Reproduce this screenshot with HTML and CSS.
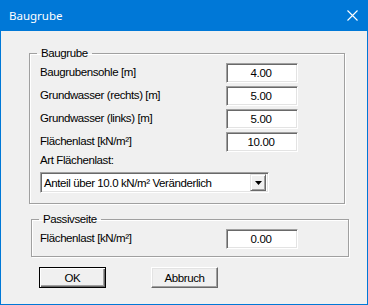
FILE: index.html
```html
<!DOCTYPE html>
<html lang="de">
<head>
    <meta charset="UTF-8">
    <title>Baugrube</title>
    <link rel="stylesheet" href="styles.css">
</head>
<body>
    <div class="window">
        <div class="titlebar">
            <span class="title">Baugrube</span>
            <svg class="close" width="11" height="11" viewBox="0 0 11 11">
                <path d="M0.5 0.5 L10.5 10.5 M10.5 0.5 L0.5 10.5" stroke="#fff" stroke-width="1.1"/>
            </svg>
        </div>

        <div class="content">
            <fieldset class="group group-main">
                <legend>Baugrube</legend>
                <div class="rows">
                    <div class="row">
                        <span>Baugrubensohle [m]</span>
                        <div class="field">4.00</div>
                    </div>
                    <div class="row">
                        <span>Grundwasser (rechts) [m]</span>
                        <div class="field">5.00</div>
                    </div>
                    <div class="row">
                        <span>Grundwasser (links) [m]</span>
                        <div class="field">5.00</div>
                    </div>
                    <div class="row">
                        <span>Flächenlast [kN/m²]</span>
                        <div class="field">10.00</div>
                    </div>
                </div>
                <div class="combo-label">Art Flächenlast:</div>
                <div class="combo">
                    <span class="combo-text">Anteil über 10.0 kN/m² Veränderlich</span>
                    <span class="combo-btn">
                        <svg width="7" height="4" viewBox="0 0 7 4"><path d="M0 0 H7 L3.5 4 Z" fill="#000"/></svg>
                    </span>
                </div>
            </fieldset>

            <fieldset class="group group-passive">
                <legend>Passivseite</legend>
                <div class="row">
                    <span>Flächenlast [kN/m²]</span>
                    <div class="field">0.00</div>
                </div>
            </fieldset>

            <div class="buttons">
                <button class="btn btn-default">OK</button>
                <button class="btn">Abbruch</button>
            </div>
        </div>
    </div>
</body>
</html>
```

FILE: styles.css
```css
body {
    margin: 0;
    padding: 0;
    font-family: "Liberation Sans", Arial, sans-serif;
    font-size: 11.5px;
    letter-spacing: -0.4px;
    color: #000;
}

.window {
    width: 368px;
    height: 305px;
    box-sizing: border-box;
    border: 1px solid #0078d7;
    border-top: none;
    background-color: #f0f0f0;
}

.titlebar {
    height: 31px;
    background-color: #0078d7;
    display: flex;
    align-items: center;
    justify-content: space-between;
    padding: 0 9px 1px 9px;
    margin: 0 -1px;
    box-sizing: border-box;
}

.title {
    font-family: "Noto Sans", "Open Sans", sans-serif;
    font-size: 11.5px;
    letter-spacing: 0;
    color: #fff;
}

.close {
    display: block;
    margin-right: 1px;
}

.content {
    padding-top: 15px;
}

/* group boxes */
.group {
    margin: 0;
    border: 1px solid #a0a0a0;
    box-shadow: 1px 1px 0 #fff, inset 1px 1px 0 #fff;
    box-sizing: border-box;
}

.group legend {
    padding: 0 4px;
    line-height: 14px;
    height: 14px;
}

.group-main {
    margin-left: 28px;
    width: 316px;
    padding: 0 7px 10px 7px;
}

.group-passive {
    margin-left: 30px;
    margin-top: 8px;
    width: 318px;
    padding: 3px 7px 7px 7px;
}

.rows {
    display: flex;
    flex-direction: column;
    gap: 3px;
    padding-top: 3px;
}

.row {
    display: grid;
    grid-template-columns: 186px 72px;
    align-items: center;
    padding-left: 3px;
    line-height: 14px;
}

.row span {
    margin-top: -2px;
}

.group-passive .row {
    padding-left: 1px;
}

.field {
    height: 20px;
    box-sizing: border-box;
    background-color: #fff;
    border: 1px solid;
    border-color: #a0a0a0 #fff #fff #a0a0a0;
    box-shadow: inset 1px 1px 0 #696969, inset -1px -1px 0 #e3e3e3;
    text-align: center;
    line-height: 18px;
    padding-right: 2px;
}

.combo-label {
    margin-top: 1px;
    padding-left: 3px;
    line-height: 14px;
}

.combo {
    margin: 5px 0 0 3px;
    width: 229px;
    height: 21px;
    box-sizing: border-box;
    background-color: #fff;
    border: 1px solid;
    border-color: #a0a0a0 #fff #fff #a0a0a0;
    box-shadow: inset 1px 1px 0 #696969, inset -1px -1px 0 #e3e3e3;
    display: flex;
    align-items: center;
    justify-content: space-between;
    padding: 2px 2px 2px 3px;
}

.combo-btn {
    width: 16px;
    height: 17px;
    box-sizing: border-box;
    background-color: #f0f0f0;
    border: 1px solid;
    border-color: #e3e3e3 #696969 #696969 #e3e3e3;
    box-shadow: inset 1px 1px 0 #fff, inset -1px -1px 0 #a0a0a0;
    display: flex;
    align-items: center;
    justify-content: center;
}

.combo-btn svg {
    display: block;
}

/* buttons */
.buttons {
    display: flex;
    gap: 45px;
    margin: 10px 0 0 38px;
}

.btn {
    width: 67px;
    height: 21px;
    box-sizing: border-box;
    font-family: inherit;
    font-size: 11.5px;
    letter-spacing: -0.4px;
    padding: 0;
    background-color: #f0f0f0;
    border: 1px solid;
    border-color: #fff #696969 #696969 #fff;
    box-shadow: inset -1px -1px 0 #a0a0a0, inset 1px 1px 0 #e3e3e3;
    color: #000;
}

.btn-default {
    border: 1px solid #000;
    box-shadow: inset 1px 1px 0 #fff, inset -1px -1px 0 #696969, inset -2px -2px 0 #a0a0a0;
}
```
